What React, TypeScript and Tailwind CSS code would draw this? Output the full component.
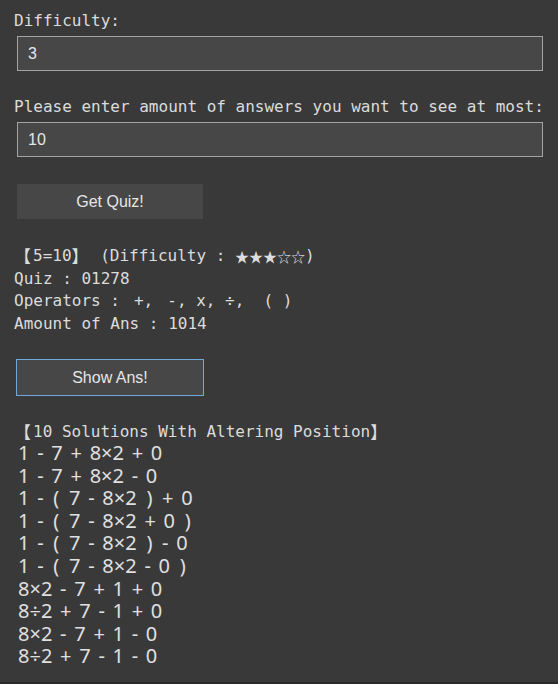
import React from "react";

const mono = { fontFamily: '"DejaVu Sans Mono", "Noto Sans CJK TC", monospace' };

const solutions = [
  "1 - 7 + 8×2 + 0",
  "1 - 7 + 8×2 - 0",
  "1 - ( 7 - 8×2 ) + 0",
  "1 - ( 7 - 8×2 + 0 )",
  "1 - ( 7 - 8×2 ) - 0",
  "1 - ( 7 - 8×2 - 0 )",
  "8×2 - 7 + 1 + 0",
  "8÷2 + 7 - 1 + 0",
  "8×2 - 7 + 1 - 0",
  "8÷2 + 7 - 1 - 0",
];

function Cjk({ children }: { children: React.ReactNode }) {
  return (
    <span className="inline-block align-top w-[19px] h-[22.6px] leading-[22.6px] overflow-visible font-['Noto_Sans_CJK_TC',sans-serif] text-[17px]">
      {children}
    </span>
  );
}

function Solution({ text }: { text: string }) {
  return (
    <div className="h-[22.6px]">
      {text.split("").map((ch, i) =>
        ch === "(" || ch === ")" ? (
          <span key={i} className="px-[2px]">
            {ch}
          </span>
        ) : (
          <React.Fragment key={i}>{ch}</React.Fragment>
        )
      )}
    </div>
  );
}

export default function App() {
  return (
    <div className="w-[558px] h-[684px] bg-[#393939] text-[#dcdcdc] overflow-hidden flex flex-col">
      <div className="flex-1 pl-[14px] pt-[10px]">
        <div className="text-[16px] leading-[22px] font-['DejaVu_Sans_Mono',monospace]">Difficulty:</div>
        <div className="mt-[4px] ml-[3px] w-[526px] h-[35px] bg-[#474747] border border-[#a3a3a3] flex items-center pl-[10px] text-[16px] font-['Liberation_Sans',sans-serif] text-[#e6e6e6]">
          3
        </div>
        <div className="mt-[25px] text-[16px] leading-[22px] font-['DejaVu_Sans_Mono',monospace]">
          Please enter amount of answers you want to see at most:
        </div>
        <div className="mt-[4px] ml-[3px] w-[526px] h-[35px] bg-[#474747] border border-[#a3a3a3] flex items-center pl-[10px] text-[16px] font-['Liberation_Sans',sans-serif] text-[#e6e6e6]">
          10
        </div>
        <div className="mt-[27px] ml-[3px] w-[186px] h-[35px] bg-[#474747] flex items-center justify-center text-[16px] font-['Liberation_Sans',sans-serif] text-[#e6e6e6]">
          Get Quiz!
        </div>
        <div className="mt-[26px] text-[16px] leading-[22.6px] whitespace-pre" style={mono}>
          <div className="h-[22.6px]">
            <Cjk>【</Cjk>5=10<Cjk>】</Cjk> (Difficulty :{" "}
            <span className="inline-block align-top h-[22.6px] leading-[22.6px] font-['Noto_Sans_CJK_TC',sans-serif] text-[14px]">
              ★★★☆☆
            </span>
            )
          </div>
          <div className="h-[22.6px]">Quiz : 01278</div>
          <div className="h-[22.6px]">
            Operators : <span className="inline-block w-[14px] text-right">+</span>,{" "}
            <span className="inline-block w-[14px] text-right">-</span>, x, ÷,  ( )
          </div>
          <div className="h-[22.6px]">Amount of Ans : 1014</div>
        </div>
        <div className="mt-[24px] ml-[2px] w-[188px] h-[37px] bg-[#474747] border border-[#6fa8dc] flex items-center justify-center text-[16px] font-['Liberation_Sans',sans-serif] text-[#e6e6e6]">
          Show Ans!
        </div>
        <div className="mt-[25px] h-[22.6px] text-[16px] leading-[22.6px] whitespace-pre" style={mono}>
          <Cjk>【</Cjk>10 Solutions With Altering Position<Cjk>】</Cjk>
        </div>
        <div className="-mt-[2px] pl-[4px] text-[20px] leading-[22.6px] [word-spacing:2.5px] font-['Noto_Sans',sans-serif] text-[#e0e0e0] whitespace-pre">
          {solutions.map((s, i) => (
            <Solution key={i} text={s} />
          ))}
        </div>
      </div>
      <div className="h-[2px] bg-[#2a2a2a]" />
    </div>
  );
}
